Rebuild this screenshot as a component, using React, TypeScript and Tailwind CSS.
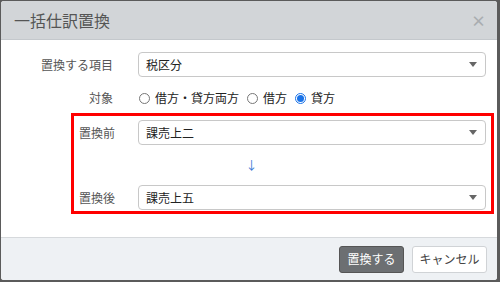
import { useState } from 'react';

const font = { fontFamily: '"Noto Sans CJK JP", "Noto Sans", sans-serif' };

function Select({ value }: { value: string }) {
  return (
    <div className="flex h-[25px] w-[348px] items-center justify-between rounded border border-[#c8c8c8] bg-white pl-[7px] pr-[8px] text-[12px] text-[#222]">
      <span>{value}</span>
      <span className="h-0 w-0 border-x-[4px] border-t-[5px] border-x-transparent border-t-[#666]" />
    </div>
  );
}

function Radio({ label, checked, onClick }: { label: string; checked: boolean; onClick: () => void }) {
  return (
    <label onClick={onClick} className="flex cursor-pointer items-center gap-[5px]">
      <span className={`flex h-[11px] w-[11px] items-center justify-center rounded-full border ${checked ? 'border-[#1a73e8]' : 'border-[#777]'} bg-white`}>
        {checked && <span className="h-[7px] w-[7px] rounded-full bg-[#1a73e8]" />}
      </span>
      <span>{label}</span>
    </label>
  );
}

export default function App() {
  const [target, setTarget] = useState('credit');
  return (
    <div className="h-[282px] w-[500px] bg-[#5b5b5b] p-[1px] pr-[3px] pb-[2px]" style={font}>
      <div className="flex h-full flex-col overflow-hidden rounded-[3px] bg-white">
        <div className="flex h-[39px] items-center justify-between border-b border-[#c4c8cc] bg-[#d2d5d8] pl-[13px] pr-[11px]">
          <h1 className="text-[16px] text-[#555]">一括仕訳置換</h1>
          <span className="text-[15px] font-bold leading-none text-[#a9adb0]">×</span>
        </div>
        <div className="flex-1 pt-[12px] text-[12px]">
          <div className="flex items-center">
            <div className="w-[112px] text-right text-[#555]">置換する項目</div>
            <div className="ml-[25px]"><Select value="税区分" /></div>
          </div>
          <div className="mt-[9px] flex h-[24px] items-center">
            <div className="w-[112px] text-right text-[#555]">対象</div>
            <div className="ml-[26px] flex gap-[8px] text-[#222]">
              <Radio label="借方・貸方両方" checked={target === 'both'} onClick={() => setTarget('both')} />
              <Radio label="借方" checked={target === 'debit'} onClick={() => setTarget('debit')} />
              <Radio label="貸方" checked={target === 'credit'} onClick={() => setTarget('credit')} />
            </div>
          </div>
          <div className="ml-[70px] mt-[3px] w-[423px] border-[3px] border-[#ff0000] pb-[1px] pt-[4px]">
            <div className="flex items-center">
              <div className="w-[64px] pl-[5px] text-[#555]">置換前</div>
              <Select value="課売上二" />
            </div>
            <div className="flex h-[40px] items-center justify-center pr-[62px] text-[12px] text-[#3a7bd5]">↓</div>
            <div className="flex items-center">
              <div className="w-[64px] pl-[5px] text-[#555]">置換後</div>
              <Select value="課売上五" />
            </div>
          </div>
        </div>
        <div className="flex h-[43px] items-center justify-end gap-[8px] border-t border-[#d6d9dc] bg-[#eef1f4] pr-[10px] text-[12px]">
          <button className="h-[27px] w-[65px] rounded-[3px] border border-[#555] bg-[#6c6f72] text-white">置換する</button>
          <button className="h-[27px] w-[75px] rounded-[3px] border border-[#d0d3d6] bg-white text-[#444]">キャンセル</button>
        </div>
      </div>
    </div>
  );
}
